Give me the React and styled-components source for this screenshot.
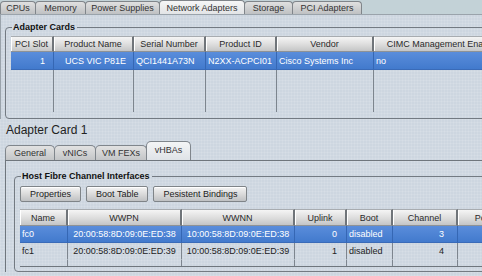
import React from 'react';
import styled, { createGlobalStyle } from "styled-components";

const GlobalStyle = createGlobalStyle`
  html, body {
    margin: 0;
    padding: 0;
  }
  body {
    font-family: "Liberation Sans", Arial, sans-serif;
    font-size: 9px;
    color: #222;
    background: #cdd6e0;
  }
`;

const Page = styled.div`
  width: 482px;
  height: 276px;
  overflow: hidden;
  background-color: #cdd6e0;
  background-image:
    repeating-linear-gradient(0deg, rgba(255,255,255,0.10) 0 1px, transparent 1px 3px),
    repeating-linear-gradient(90deg, rgba(255,255,255,0.10) 0 1px, transparent 1px 3px);
`;

const TopTabs = styled.div`
  height: 14px;
  display: flex;
  align-items: flex-end;
  background: #c3d2d7;
  border-bottom: 1px solid #9aa3ab;
`;

const TopTab = styled.div`
  width: ${p => p.w}px;
  height: ${p => p.active ? 14 : 13}px;
  box-sizing: border-box;
  display: flex;
  align-items: center;
  justify-content: center;
  border: 1px solid #80858a;
  border-bottom: none;
  border-radius: 4px 4px 0 0;
  background: ${p => p.active
    ? 'linear-gradient(#f6f6f6, #e2e4e6)'
    : 'linear-gradient(#e0e0e0, #bfc1c3)'};
  color: #333;
  margin-right: -1px;
`;

const TopPanel = styled.div`
  padding: 7px 0 0 4px;
  border-left: 1px solid #9aa3ab;
`;

const Group = styled.fieldset`
  margin: 0 -30px 0 0;
  padding: ${p => p.pad};
  border: 1px solid #737a82;
  border-radius: 4px;
  min-width: 0;
`;

const Legend = styled.legend`
  font-weight: bold;
  font-size: 9px;
  line-height: 11px;
  padding: 0 2px 0 1px;
  margin-left: 1px;
  color: #111;
`;

const Grid = styled.div`
  display: grid;
  grid-template-columns: ${p => p.cols};
`;

const Head = styled.div`
  height: ${p => p.h}px;
  box-sizing: border-box;
  display: flex;
  align-items: center;
  justify-content: center;
  background: linear-gradient(#f5f5f5, #dcdcdc 55%, #c4c5c6);
  border-top: 1px solid #a8acb0;
  border-bottom: 1px solid #8e9296;
  border-right: 2px solid #6f7479;
  box-shadow: inset 1px 0 0 #ffffff;
  color: #2a2a2a;
  white-space: nowrap;
  overflow: hidden;
`;

const Cell = styled.div`
  height: ${p => p.h}px;
  box-sizing: border-box;
  display: flex;
  align-items: center;
  justify-content: ${p => p.align === 'right' ? 'flex-end' : p.align === 'center' ? 'center' : 'flex-start'};
  padding: ${p => p.align === 'right' ? `0 ${p.pr || 8}px 0 0` : p.align === 'center' ? '0' : '0 0 0 2px'};
  background: ${p => p.sel ? 'linear-gradient(#5a8ddb, #427acd)' : 'transparent'};
  color: ${p => p.sel ? '#fff' : '#222'};
  border-right: 1px solid ${p => p.sel ? '#3567b4' : '#7d858e'};
  border-bottom: 1px solid ${p => p.sel ? '#3a6bb8' : 'transparent'};
  white-space: nowrap;
  overflow: hidden;
`;

const Filler = styled.div`
  height: ${p => p.h}px;
  border-right: 1px solid #7d858e;
`;

const Heading = styled.div`
  font-size: 12px;
  line-height: 16px;
  color: #222;
  padding: 3px 0 3px 6px;
`;

const SubTabs = styled.div`
  display: flex;
  align-items: flex-end;
  height: 19px;
  padding-left: 5px;
`;

const SubTab = styled.div`
  width: ${p => p.w}px;
  height: ${p => p.active ? 19 : 15}px;
  box-sizing: border-box;
  display: flex;
  align-items: ${p => p.active ? 'flex-start' : 'center'};
  padding-top: ${p => p.active ? 3 : 0}px;
  justify-content: center;
  border: 1px solid #80868c;
  border-bottom: none;
  border-radius: 5px 5px 0 0;
  background: ${p => p.active
    ? 'linear-gradient(#f4f5f6, #dfe3e7)'
    : 'linear-gradient(#e2e2e2, #c3c5c7)'};
  color: #333;
  margin-right: -1px;
`;

const SubPanel = styled.div`
  margin-left: 5px;
  border-top: 1px solid #6f767d;
  border-left: 1px solid #6f767d;
  padding: 10px 0 0 8px;
`;

const Buttons = styled.div`
  display: flex;
  gap: 5px;
  margin-bottom: 7px;
`;

const Button = styled.button`
  height: 16px;
  padding: 0 9px;
  font-family: inherit;
  font-size: 9px;
  color: #222;
  border: 1px solid #7f8488;
  border-radius: 2px;
  background: linear-gradient(#f4f4f4, #d8d8d8 55%, #bfc1c3);
  box-shadow: inset 0 1px 0 #fff;
`;

const TableWrap = styled.div`
  border-bottom: 1px solid #6f767d;
`;

const cards = [
  { label: 'PCI Slot', w: 43 },
  { label: 'Product Name', w: 80 },
  { label: 'Serial Number', w: 72 },
  { label: 'Product ID', w: 71 },
  { label: 'Vendor', w: 97 },
  { label: 'CIMC Management Enabled', w: 141 },
];

const cardRow = [
  { v: '1', align: 'right', pr: 8 },
  { v: 'UCS VIC P81E', align: 'right', pr: 7 },
  { v: 'QCI1441A73N' },
  { v: 'N2XX-ACPCI01' },
  { v: 'Cisco Systems Inc' },
  { v: 'no' },
];

const hbaCols = [
  { label: 'Name', w: 48 },
  { label: 'WWPN', w: 114 },
  { label: 'WWNN', w: 113 },
  { label: 'Uplink', w: 52 },
  { label: 'Boot', w: 46 },
  { label: 'Channel', w: 65 },
  { label: 'Port Profile', w: 80 },
];

const hbas = [
  ['fc0', '20:00:58:8D:09:0E:ED:38', '10:00:58:8D:09:0E:ED:38', '0', 'disabled', '3', ''],
  ['fc1', '20:00:58:8D:09:0E:ED:39', '10:00:58:8D:09:0E:ED:39', '1', 'disabled', '4', ''],
];

const hbaAlign = ['left', 'center', 'center', 'right', 'left', 'right', 'left'];
const hbaPad = [0, 0, 0, 9, 0, 13, 0];

export default function App() {
  const cardCols = cards.map(c => c.w + 'px').join(' ');
  const hCols = hbaCols.map(c => c.w + 'px').join(' ');

  return (
    <Page>
      <GlobalStyle />
      <TopTabs>
        <TopTab w={36}>CPUs</TopTab>
        <TopTab w={51}>Memory</TopTab>
        <TopTab w={75}>Power Supplies</TopTab>
        <TopTab w={86} active>Network Adapters</TopTab>
        <TopTab w={49}>Storage</TopTab>
        <TopTab w={70}>PCI Adapters</TopTab>
      </TopTabs>

      <TopPanel>
        <Group pad="3px 0 6px 5px">
          <Legend>Adapter Cards</Legend>
          <Grid cols={cardCols}>
            {cards.map(c => <Head key={c.label} h={16}>{c.label}</Head>)}
            {cardRow.map((c, i) => (
              <Cell key={i} h={18} sel align={c.align} pr={c.pr}>{c.v}</Cell>
            ))}
            {cards.map((c, i) => <Filler key={i} h={42} />)}
          </Grid>
        </Group>
      </TopPanel>

      <Heading>Adapter Card 1</Heading>

      <SubTabs>
        <SubTab w={50}>General</SubTab>
        <SubTab w={42}>vNICs</SubTab>
        <SubTab w={52}>VM FEXs</SubTab>
        <SubTab w={45} active>vHBAs</SubTab>
      </SubTabs>

      <SubPanel>
        <Group pad="4px 0 4px 5px">
          <Legend>Host Fibre Channel Interfaces</Legend>
          <Buttons>
            <Button>Properties</Button>
            <Button>Boot Table</Button>
            <Button>Pesistent Bindings</Button>
          </Buttons>
          <TableWrap>
            <Grid cols={hCols}>
              {hbaCols.map(c => <Head key={c.label} h={17}>{c.label}</Head>)}
              {hbas.map((row, r) => row.map((v, i) => (
                <Cell key={r + '-' + i} h={17} sel={r === 0} align={hbaAlign[i]} pr={hbaPad[i]}>{v}</Cell>
              )))}
              {hbaCols.map((c, i) => <Filler key={i} h={6} />)}
            </Grid>
          </TableWrap>
        </Group>
      </SubPanel>
    </Page>
  );
}
